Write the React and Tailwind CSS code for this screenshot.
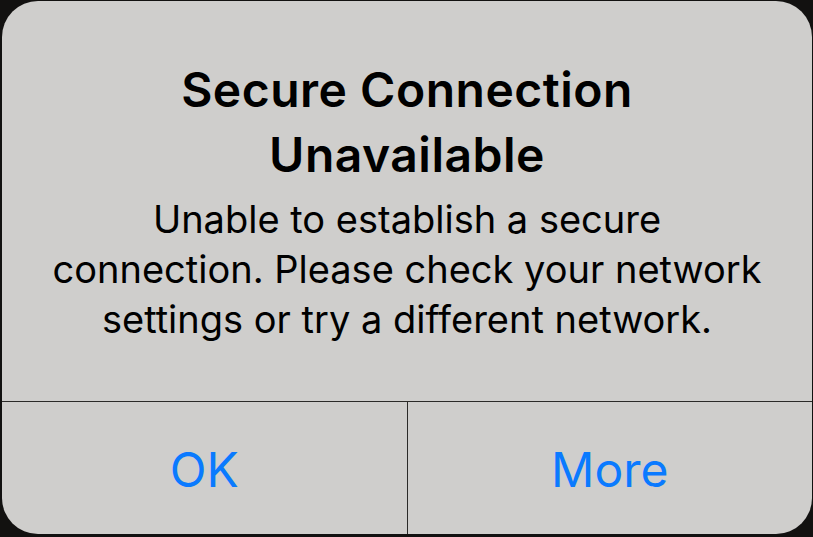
export default function App() {
  return (
    <div className="w-[813px] h-[537px] bg-[#121110] pl-[2px] pt-[1px] overflow-hidden">
      <div
        className="w-[810px] h-[533px] rounded-[36px] bg-[#cfcecc] flex flex-col overflow-hidden text-center"
        style={{ fontFamily: "Inter, 'Liberation Sans', sans-serif" }}
      >
        {/* message */}
        <div className="h-[401px] pt-[56px] border-b border-[#2b2a28]">
          <h1 className="text-[48px] leading-[65px] font-semibold text-black tracking-[0.5px]">
            Secure Connection
            <br />
            Unavailable
          </h1>
          <p className="mt-[7px] text-[38px] leading-[50px] text-black">
            Unable to establish a secure
            <br />
            connection. Please check your network
            <br />
            settings or try a different network.
          </p>
        </div>

        {/* buttons */}
        <div className="flex flex-1">
          <button className="flex-1 flex items-center justify-center pt-[4px] text-[48px] text-[#0a7aff] border-r border-[#2b2a28]">
            OK
          </button>
          <button className="flex-1 flex items-center justify-center pt-[4px] text-[48px] text-[#0a7aff]">
            More
          </button>
        </div>
      </div>
    </div>
  );
}
